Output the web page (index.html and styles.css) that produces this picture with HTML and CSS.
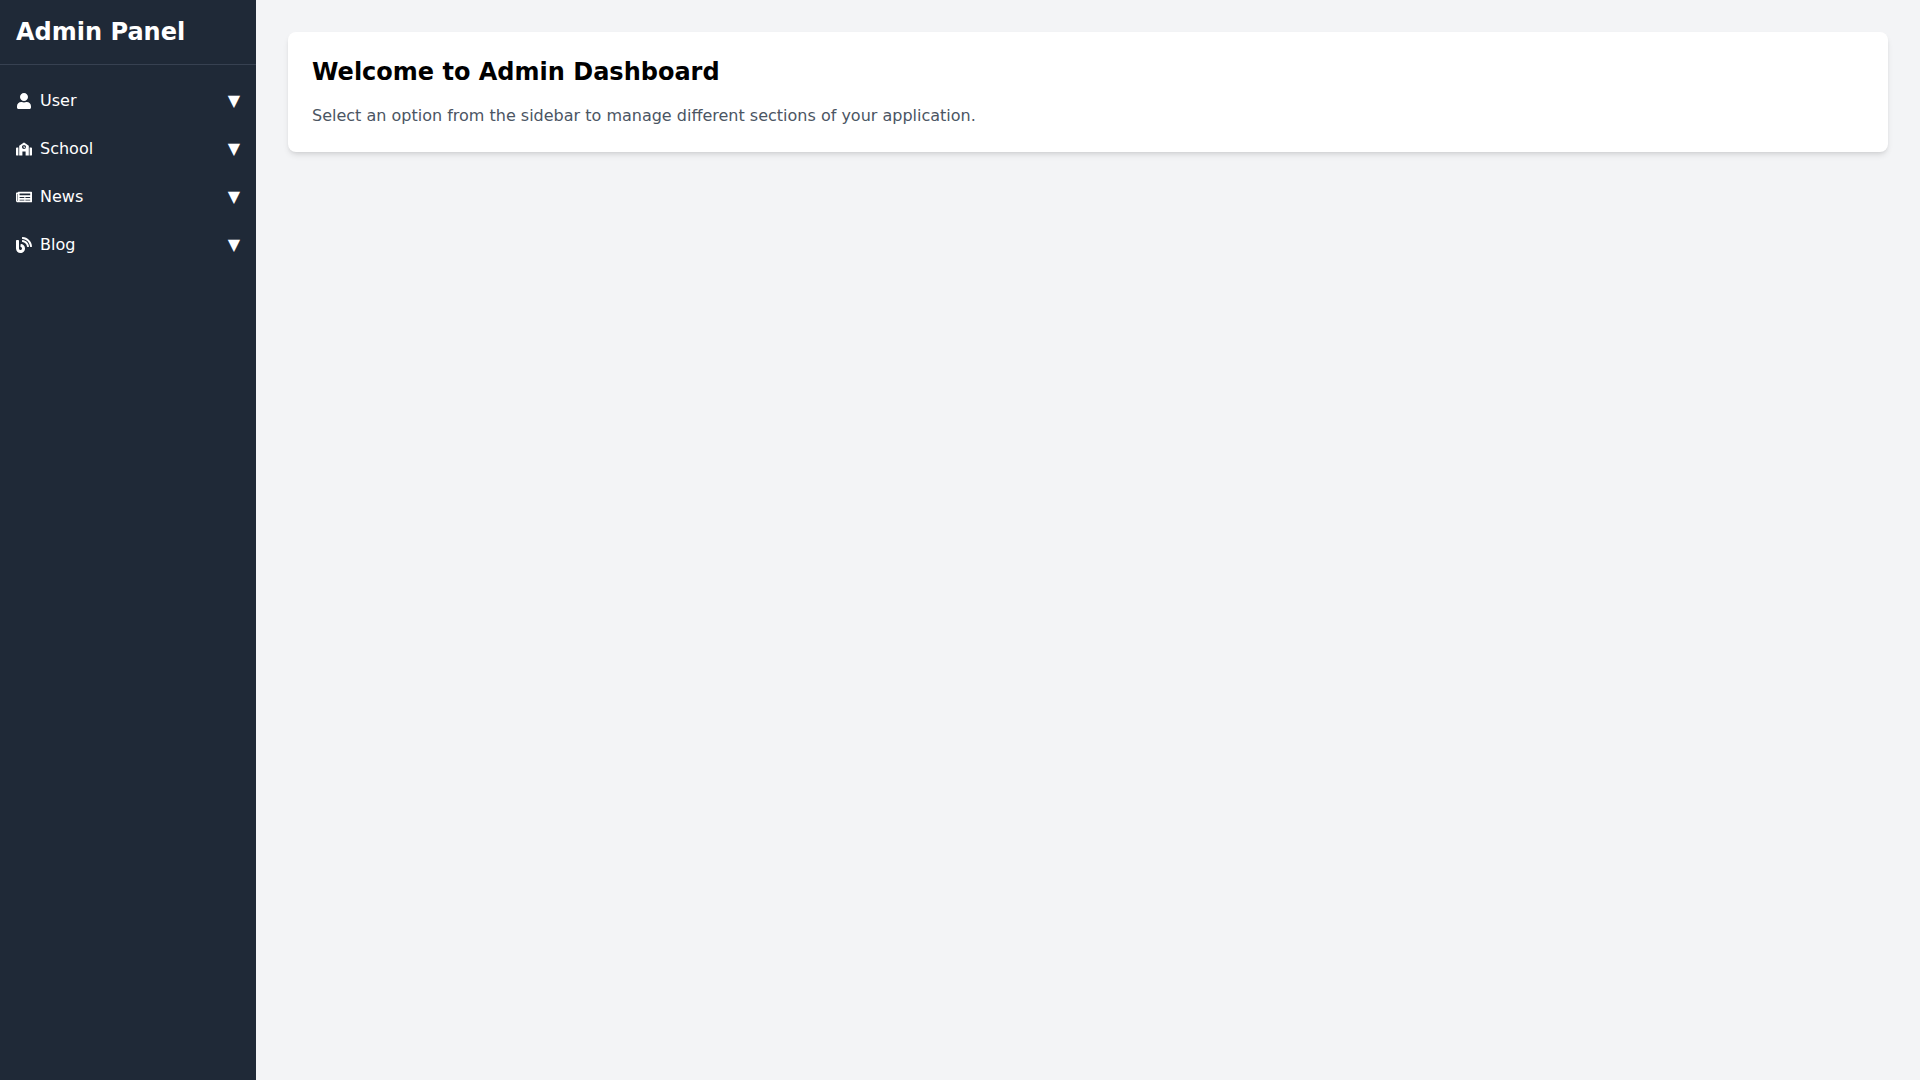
FILE: index.html
```html
<!DOCTYPE html>
<html lang="en">
<head>
  <meta charset="UTF-8">
  <meta name="viewport" content="width=device-width, initial-scale=1">
  <title>Admin Panel</title>
  <link rel="stylesheet" href="styles.css">
</head>
<body>
  <div class="layout">
    <aside class="sidebar">
      <div class="sidebar-title">Admin Panel</div>
      <nav class="menu" aria-label="Admin sections">
        <button class="menu-item" type="button" aria-expanded="false">
          <span class="menu-label">
            <svg class="icon" viewBox="0 0 448 512" aria-hidden="true"><path d="M224 256c70.7 0 128-57.3 128-128S294.7 0 224 0 96 57.3 96 128s57.3 128 128 128zm89.6 32h-16.7c-22.2 10.2-46.9 16-72.9 16s-50.6-5.8-72.9-16h-16.7C60.2 288 0 348.2 0 422.4V464c0 26.5 21.5 48 48 48h352c26.5 0 48-21.5 48-48v-41.6c0-74.2-60.2-134.4-134.4-134.4z"/></svg>
            User
          </span>
          <span aria-hidden="true">▼</span>
        </button>
        <button class="menu-item" type="button" aria-expanded="false">
          <span class="menu-label">
            <svg class="icon" viewBox="0 0 640 512" aria-hidden="true"><path d="M0 224v272c0 8.84 7.16 16 16 16h80V192H32c-17.67 0-32 14.33-32 32zm360-48h-24v-40c0-4.42-3.58-8-8-8h-16c-4.42 0-8 3.58-8 8v64c0 4.42 3.58 8 8 8h48c4.42 0 8-3.58 8-8v-16c0-4.42-3.58-8-8-8zm137.75-63.96l-160-106.67a32.02 32.02 0 0 0-35.5 0l-160 106.67A32.002 32.002 0 0 0 128 138.66V512h128V368c0-8.84 7.16-16 16-16h96c8.84 0 16 7.16 16 16v144h128V138.67c0-10.7-5.35-20.69-14.25-26.63zM320 256c-44.18 0-80-35.82-80-80s35.82-80 80-80 80 35.82 80 80-35.82 80-80 80zm288-64h-64v320h80c8.84 0 16-7.16 16-16V224c0-17.67-14.33-32-32-32z"/></svg>
            School
          </span>
          <span aria-hidden="true">▼</span>
        </button>
        <button class="menu-item" type="button" aria-expanded="false">
          <span class="menu-label">
            <svg class="icon" viewBox="0 0 576 512" aria-hidden="true"><path d="M552 64H88c-13.255 0-24 10.745-24 24v8H24c-13.255 0-24 10.745-24 24v272c0 30.928 25.072 56 56 56h496c13.255 0 24-10.745 24-24V88c0-13.255-10.745-24-24-24zM56 400a8 8 0 0 1-8-8V144h16v248a8 8 0 0 1-8 8zm236-16H140c-6.627 0-12-5.373-12-12v-8c0-6.627 5.373-12 12-12h152c6.627 0 12 5.373 12 12v8c0 6.627-5.373 12-12 12zm208 0H348c-6.627 0-12-5.373-12-12v-8c0-6.627 5.373-12 12-12h152c6.627 0 12 5.373 12 12v8c0 6.627-5.373 12-12 12zm-208-96H140c-6.627 0-12-5.373-12-12v-8c0-6.627 5.373-12 12-12h152c6.627 0 12 5.373 12 12v8c0 6.627-5.373 12-12 12zm208 0H348c-6.627 0-12-5.373-12-12v-8c0-6.627 5.373-12 12-12h152c6.627 0 12 5.373 12 12v8c0 6.627-5.373 12-12 12zm0-96H140c-6.627 0-12-5.373-12-12v-40c0-6.627 5.373-12 12-12h360c6.627 0 12 5.373 12 12v40c0 6.627-5.373 12-12 12z"/></svg>
            News
          </span>
          <span aria-hidden="true">▼</span>
        </button>
        <button class="menu-item" type="button" aria-expanded="false">
          <span class="menu-label">
            <svg class="icon" viewBox="0 0 512 512" aria-hidden="true"><path d="M172.2 226.8c-14.6-2.9-28.2 8.9-28.2 23.8V301c0 10.2 7.1 18.4 16.7 22 18.2 6.8 31.3 24.4 31.3 45 0 26.5-21.5 48-48 48s-48-21.5-48-48V120c0-13.3-10.7-24-24-24H24c-13.3 0-24 10.7-24 24v248c0 89.5 82.1 160.2 175 140.7 54.4-11.4 98.3-55.4 109.7-109.7 17.4-82.9-37-157.2-112.5-172.2zM209 0c-9.2-.5-17 6.8-17 16v31.6c0 8.5 6.6 15.5 15 15.9 129.4 7 233.4 112 240.9 241.5.5 8.4 7.5 15 15.9 15h32.1c9.2 0 16.5-7.8 16-17C503.4 139.8 372.2 8.6 209 0zm.3 96c-9.3-.7-17.3 6.7-17.3 16.1v32.1c0 8.4 6.5 15.3 14.8 15.9 76.8 6.3 138 68.2 144.9 145.2.8 8.3 7.6 14.7 15.9 14.7h32.2c9.3 0 16.8-8 16.1-17.3-8.4-110.1-96.5-198.2-206.6-206.7z"/></svg>
            Blog
          </span>
          <span aria-hidden="true">▼</span>
        </button>
      </nav>
    </aside>
    <main class="content">
      <section class="card">
        <h1 class="card-title">Welcome to Admin Dashboard</h1>
        <p class="card-text">Select an option from the sidebar to manage different sections of your application.</p>
      </section>
    </main>
  </div>
</body>
</html>
```

FILE: styles.css
```css
* {
  box-sizing: border-box;
}

body {
  margin: 0;
  font-family: "DejaVu Sans", sans-serif;
  font-size: 16px;
  line-height: 24px;
  color: #000;
}

.layout {
  display: flex;
  min-height: 100vh;
  background: #f3f4f6;
}

.sidebar {
  flex: none;
  width: 256px;
  background: #1f2937;
  color: #fff;
}

.sidebar-title {
  padding: 16px;
  border-bottom: 1px solid #374151;
  font-size: 24px;
  line-height: 32px;
  font-weight: 700;
}

.menu {
  display: flex;
  flex-direction: column;
  gap: 8px;
  margin-top: 16px;
}

.menu-item {
  display: flex;
  align-items: center;
  justify-content: space-between;
  width: 100%;
  padding: 8px 16px;
  border: 0;
  background: transparent;
  color: inherit;
  font: inherit;
  text-align: left;
  cursor: pointer;
}

.menu-item:hover {
  background: #374151;
}

.menu-label {
  display: flex;
  align-items: center;
  gap: 8px;
}

.icon {
  width: 16px;
  height: 16px;
  fill: currentColor;
}

.content {
  flex: 1;
  min-width: 0;
  padding: 32px;
}

.card {
  padding: 24px;
  border-radius: 8px;
  background: #fff;
  box-shadow: 0 4px 6px -1px rgba(0, 0, 0, 0.1), 0 2px 4px -2px rgba(0, 0, 0, 0.1);
}

.card-title {
  margin: 0 0 16px;
  font-size: 24px;
  line-height: 32px;
  font-weight: 700;
}

.card-text {
  margin: 0;
  color: #4b5563;
}
```
